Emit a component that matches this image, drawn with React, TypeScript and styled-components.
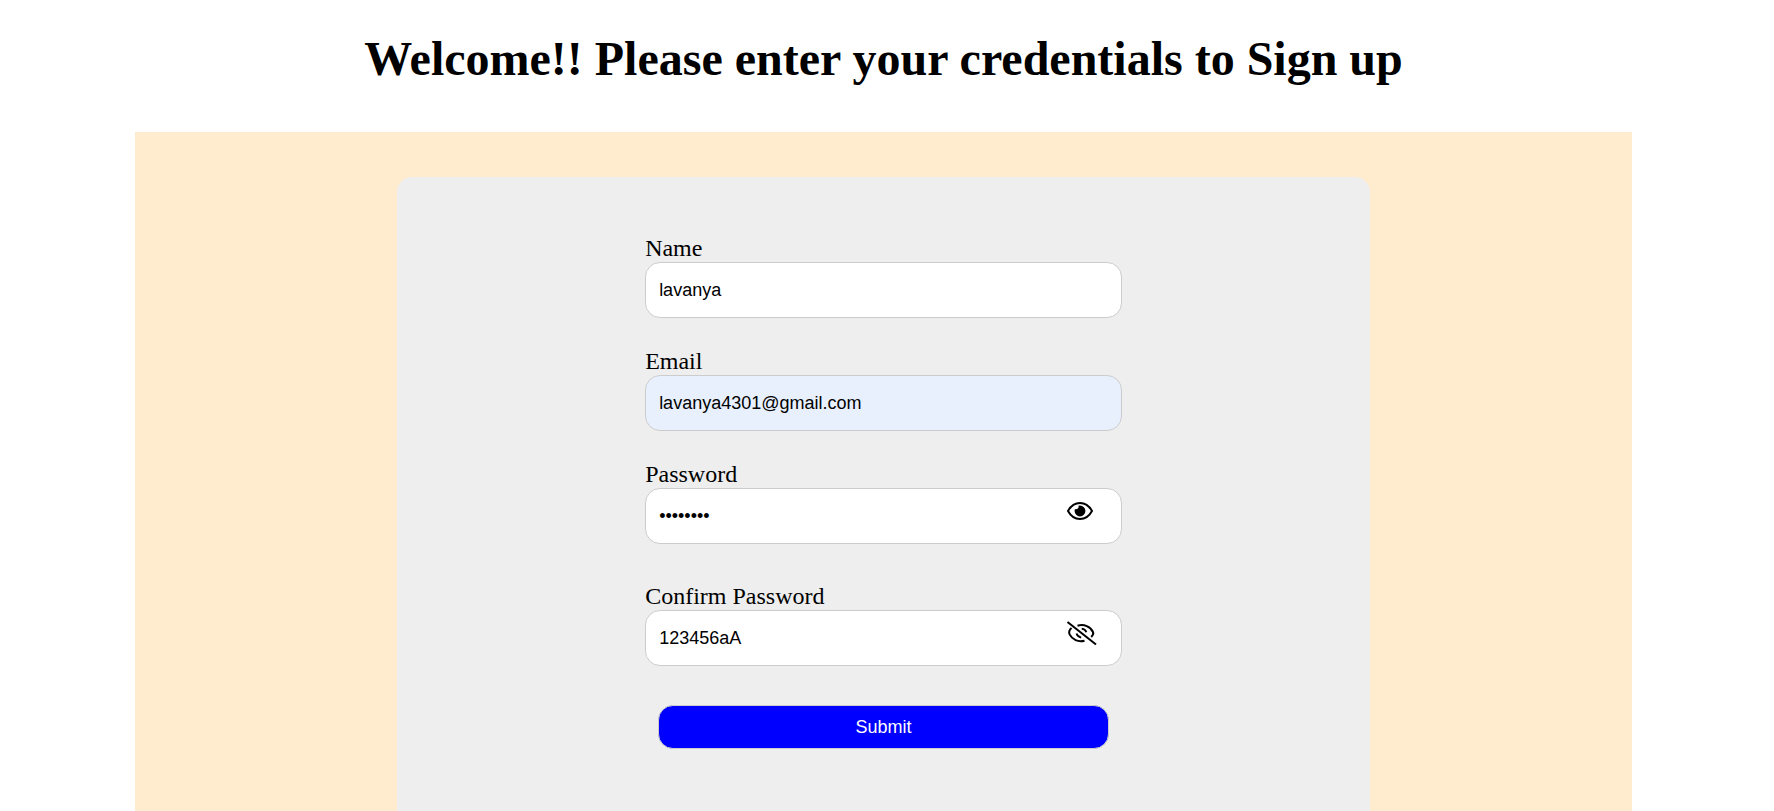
import React, { useState } from "react";
import styled, { createGlobalStyle } from "styled-components";

const GlobalStyle = createGlobalStyle`
  *, *::before, *::after { box-sizing: border-box; }
  body {
    margin: 0;
    background: #fff;
    color: #000;
    font-family: "Liberation Serif", "Times New Roman", serif;
  }
`;

const Page = styled.main`
  display: flex;
  flex-direction: column;
  align-items: center;
  min-height: 100vh;
  padding: 0 10px 0 3px;
`;

const Title = styled.h1`
  margin: 30px 0 44px;
  font-size: 48px;
  line-height: 58px;
  font-weight: 700;
  text-align: center;
`;

const Backdrop = styled.section`
  display: flex;
  justify-content: center;
  flex: 1;
  width: 85%;
  padding-top: 45px;
  background: #ffebcd;
`;

const SignUpForm = styled.form`
  display: flex;
  flex-direction: column;
  align-items: center;
  width: 65%;
  padding-top: 58px;
  border-radius: 15px 15px 0 0;
  background: #eee;
`;

const Fields = styled.div`
  display: flex;
  flex-direction: column;
  width: 49%;
`;

const Field = styled.div<{ $gap: number }>`
  display: flex;
  flex-direction: column;
  margin-bottom: ${(p) => p.$gap}px;
`;

const Label = styled.label`
  font-size: 24px;
  line-height: 27px;
`;

const Control = styled.div`
  position: relative;
`;

const TextInput = styled.input<{ $autofilled?: boolean }>`
  display: block;
  width: 100%;
  height: 56px;
  padding: 0 13px;
  border: 1px solid #ccc;
  border-radius: 15px;
  outline: none;
  background: ${(p) => (p.$autofilled ? "#e8f0fe" : "#fff")};
  color: #000;
  font-family: "Liberation Sans", Arial, sans-serif;
  font-size: 18px;
`;

const RevealButton = styled.button`
  position: absolute;
  top: 8px;
  right: 25px;
  display: flex;
  padding: 0;
  border: 0;
  background: none;
  color: #000;
  cursor: pointer;
`;

const SubmitButton = styled.button`
  height: 44px;
  margin: 4px 13px 0;
  border: 1px solid #ccc;
  border-radius: 15px;
  background: #00f;
  color: #fff;
  font-family: "Liberation Sans", Arial, sans-serif;
  font-size: 18px;
  cursor: pointer;
`;

const EyeIcon = () => (
  <svg width="32" height="30" viewBox="0 0 32 30" fill="none" aria-hidden="true">
    <path
      d="M3 15C6 9.500 10 7 15 7s9 2.500 12 8c-3 5.500-7 8-12 8S6 20.500 3 15z"
      stroke="currentColor"
      strokeWidth="2"
      strokeLinejoin="round"
    />
    <path d="M15 9.600a5.400 5.400 0 1 1-5.400 5.400c0-.700.100-1.300.400-1.900a2.700 2.700 0 0 0 3.500-3.300c.500-.100 1-.200 1.500-.200z" fill="currentColor" />
  </svg>
);

const EyeOffIcon = () => (
  <svg width="32" height="30" viewBox="0 0 32 30" fill="none" stroke="currentColor" strokeWidth="2" aria-hidden="true">
    <path d="M2.500 4L31 26.500" />
    <path d="M12.500 7.800C19 5.800 25.500 8.500 28 14c.700 1.700 0 3.400-1.800 4.900" />
    <path d="M6.500 10C4.300 12 3.600 14.200 4.600 16.400 7.200 21.700 13 24.400 19.500 22.700" />
    <path d="M16.700 10.700c2.200.300 4 1.600 4.700 3.600M11.500 15.600c.600 2.200 2.400 3.600 4.700 4" strokeWidth="1.800" />
  </svg>
);

type PasswordFieldProps = {
  id: string;
  label: string;
  gap: number;
  initialValue: string;
  initiallyVisible?: boolean;
};

function PasswordField({ id, label, gap, initialValue, initiallyVisible = false }: PasswordFieldProps) {
  const [visible, setVisible] = useState(initiallyVisible);
  return (
    <Field $gap={gap}>
      <Label htmlFor={id}>{label}</Label>
      <Control>
        <TextInput id={id} type={visible ? "text" : "password"} defaultValue={initialValue} />
        <RevealButton
          type="button"
          aria-label={visible ? "Hide password" : "Show password"}
          onClick={() => setVisible(!visible)}
        >
          {visible ? <EyeOffIcon /> : <EyeIcon />}
        </RevealButton>
      </Control>
    </Field>
  );
}

export default function App() {
  return (
    <>
      <GlobalStyle />
      <Page>
        <Title>Welcome!! Please enter your credentials to Sign up</Title>
        <Backdrop>
          <SignUpForm onSubmit={(e) => e.preventDefault()}>
            <Fields>
              <Field $gap={30}>
                <Label htmlFor="name">Name</Label>
                <TextInput id="name" type="text" defaultValue="lavanya" />
              </Field>
              <Field $gap={30}>
                <Label htmlFor="email">Email</Label>
                <TextInput id="email" type="email" defaultValue="lavanya4301@gmail.com" $autofilled />
              </Field>
              <PasswordField id="password" label="Password" gap={39} initialValue="123456aA" />
              <PasswordField
                id="confirm-password"
                label="Confirm Password"
                gap={35}
                initialValue="123456aA"
                initiallyVisible
              />
              <SubmitButton type="submit">Submit</SubmitButton>
            </Fields>
          </SignUpForm>
        </Backdrop>
      </Page>
    </>
  );
}
